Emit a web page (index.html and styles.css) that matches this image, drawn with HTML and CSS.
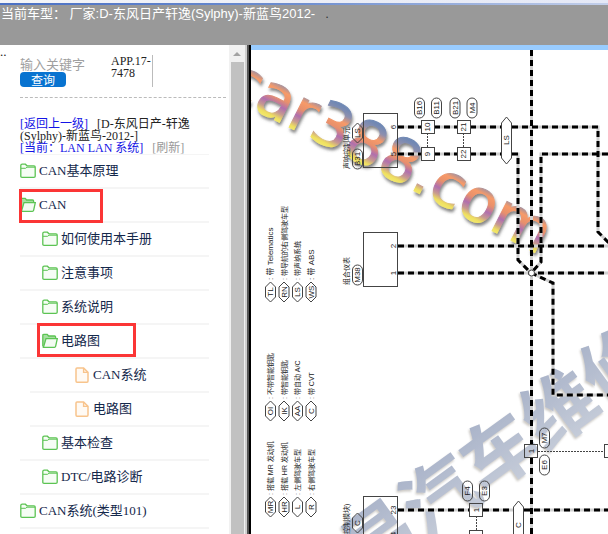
FILE: index.html
```html
<!DOCTYPE html>
<html lang="zh-CN">
<head>
<meta charset="utf-8">
<title>CAN</title>
<link rel="stylesheet" href="styles.css">
</head>
<body>
<svg class="defs" aria-hidden="true">
  <symbol id="folder" viewBox="0 0 16 16">
    <path d="M.8 13.2V2.6Q.8 1.2 2.2 1.2H5.4L7 2.8H14Q15.2 2.8 15.2 4V13.2Q15.2 14.3 14 14.3H2Q.8 14.3 .8 13.2Z" fill="#f6fdf5" stroke="#5cc453" stroke-width="1.3"/>
    <path d="M1 5.3H5.6L7 4.2H15" fill="none" stroke="#5cc453"/>
  </symbol>
  <symbol id="folder-open" viewBox="0 0 16 16">
    <path d="M.8 13.4V2.4Q.8 1.3 2 1.3H5.2L6.6 3H12.6Q13.6 3 13.6 4V5.5" fill="#a5dfa0" stroke="#5cc453" stroke-width="1.3"/>
    <path d="M4 5.6H15.3L13.6 13.4Q13.4 14.3 12.4 14.3H1.4L3 9Z" fill="#f3fbf2" stroke="#5cc453" stroke-width="1.3"/>
  </symbol>
  <symbol id="file" viewBox="0 0 14 16">
    <path d="M1 14V2Q1 .9 2 .9H8.6L13 5.4V14Q13 15.2 12 15.2H2Q1 15.2 1 14Z" fill="#fffaf4" stroke="#f8c48c" stroke-width="1.5"/>
    <path d="M8.6 1V5.4H13" fill="none" stroke="#f8c48c" stroke-width="1.4"/>
  </symbol>
</svg>

<header class="top">
  <h1 class="title">当前车型： 厂家:D-东风日产轩逸(Sylphy)-新蓝鸟2012-</h1>
  <span class="dot">.</span>
</header>

<main class="frames">
  <aside class="side">
    <span class="gutter">..</span>
    <div class="content">
      <form class="search">
        <div class="fields">
          <input class="keyword" type="text" placeholder="输入关键字" aria-label="输入关键字">
          <button class="go" type="button">查询</button>
        </div>
        <p class="app">APP.17-7478</p>
      </form>
      <p class="crumbs"><a href="#">[返回上一级]</a><span class="model">[D-东风日产-轩逸<br>(Sylphy)-新蓝鸟-2012-]</span><br><a href="#">[当前：LAN LAN 系统]</a><a class="refresh" href="#">[刷新]</a></p>
      <nav>
        <ul class="tree">
          <li><a class="row" href="#"><svg class="icon"><use href="#folder"/></svg>CAN基本原理</a></li>
          <li><a class="row marked" href="#"><svg class="icon"><use href="#folder-open"/></svg>CAN</a>
            <ul>
              <li><a class="row second" href="#"><svg class="icon"><use href="#folder"/></svg>如何使用本手册</a></li>
              <li><a class="row second" href="#"><svg class="icon"><use href="#folder"/></svg>注意事项</a></li>
              <li><a class="row second" href="#"><svg class="icon"><use href="#folder"/></svg>系统说明</a></li>
              <li><a class="row second marked" href="#"><svg class="icon"><use href="#folder-open"/></svg>电路图</a>
                <ul class="leaves">
                  <li><a class="row third" href="#"><svg class="icon page"><use href="#file"/></svg>CAN系统</a></li>
                  <li><a class="row third" href="#"><svg class="icon page"><use href="#file"/></svg>电路图</a></li>
                </ul>
              </li>
              <li><a class="row second" href="#"><svg class="icon"><use href="#folder"/></svg>基本检查</a></li>
              <li><a class="row second" href="#"><svg class="icon"><use href="#folder"/></svg>DTC/电路诊断</a></li>
            </ul>
          </li>
          <li><a class="row" href="#"><svg class="icon"><use href="#folder"/></svg>CAN系统(类型101)</a></li>
        </ul>
      </nav>
    </div>
  </aside>
  <div class="scroll" aria-hidden="true"><span class="arrow"></span><span class="thumb"></span></div>
  <div class="divider"></div>
  <section class="viewer">
    <div class="bar"></div>
    <svg class="diagram" viewBox="251 50 357 484" preserveAspectRatio="xMinYMin slice" role="img" aria-label="CAN系统 电路图">
      <defs>
        <linearGradient id="rainbow" gradientUnits="userSpaceOnUse" x1="0" y1="-43" x2="0" y2="2">
          <stop offset="0" stop-color="#6f88b4"/><stop offset=".16" stop-color="#8d8fae"/>
          <stop offset=".32" stop-color="#f79a68"/><stop offset=".48" stop-color="#e8906c"/>
          <stop offset=".64" stop-color="#b06fae"/><stop offset=".78" stop-color="#c79a90"/>
          <stop offset=".9" stop-color="#efe060"/><stop offset="1" stop-color="#f3ea70"/>
        </linearGradient>
        <linearGradient id="steel" x1="0" y1="0" x2="0" y2="1">
          <stop offset="0" stop-color="#8492b2"/><stop offset="1" stop-color="#b9c1d0"/>
        </linearGradient>
        <filter id="shade" x="-10%" y="-30%" width="120%" height="160%"><feDropShadow dx="1" dy="3" stdDeviation="1.5" flood-color="#555" flood-opacity=".7"/></filter>
        <filter id="emboss" x="-10%" y="-30%" width="120%" height="160%"><feDropShadow dx="-1" dy="2" stdDeviation="1" flood-color="#8d877c" flood-opacity=".6"/></filter>
        <path id="hex" d="M0-10L5-5V5L0 10L-5 5V-5Z"/>
        <rect id="pill" x="-5" y="-10" width="10" height="20" rx="5"/>
        <g id="wires">
          <path d="M398 127H421M434 127H457M470 127H501M512 127H598V232L610 244"/>
          <path d="M398 154H421M434 154H457M470 154H501M512 154H518V260L531 273"/>
          <path d="M608 154H541V262L531 273"/>
          <path d="M531.500 50V444M531.500 458V534"/>
          <path d="M398 246H608M398 273H608"/>
          <path d="M531 273L553 283V395H608"/>
          <path d="M398 510H469M483 510H513M524 510H608"/>
        </g>
      </defs>

      <g class="mark-cn" filter="url(#emboss)"><text transform="translate(499 452) rotate(-36)" y="27">易汽车维修</text></g>
      <g class="mark-en" filter="url(#shade)"><text transform="translate(222 93) rotate(27)">car388.com</text></g>

      <use href="#wires" class="casing"/>
      <use href="#wires" class="core"/>

      <g class="thin">
        <rect x="363.500" y="113.500" width="34" height="54"/>
        <rect x="363.500" y="232.500" width="34" height="54"/>
        <rect x="363.500" y="496.500" width="34" height="60"/>
        <path class="dots" d="M427.500 133V147M463.500 133V147M476.500 516V530M538 451.500H604"/>
        <g class="solid">
          <rect x="421.500" y="120.500" width="13" height="13"/><rect x="421.500" y="147.500" width="13" height="13"/>
          <rect x="457.500" y="120.500" width="13" height="13"/><rect x="457.500" y="147.500" width="13" height="13"/>
          <path d="M506.500 117L511.500 123V158L506.500 164L501.500 158V123Z"/>
          <path d="M513.500 540V507L518.500 501L523.500 507V540"/>
          <rect x="604.500" y="444.500" width="13" height="13"/>
          <rect x="469.500" y="530.500" width="13" height="13"/>
          <circle cx="531.500" cy="273" r="3"/>
        </g>
        <rect x="469.500" y="503.500" width="13" height="13"/>
        <rect x="524.500" y="444.500" width="13" height="13"/>
        <use href="#pill" x="419.500" y="108"/><use href="#pill" x="436.500" y="108"/><use href="#pill" x="455" y="108"/><use href="#pill" x="472" y="108"/>
        <use href="#pill" x="357.500" y="159"/><use href="#pill" x="357.500" y="275"/>
        <use href="#pill" x="544.500" y="438"/><use href="#pill" x="544.500" y="465"/>
        <use href="#pill" x="467.500" y="491"/><use href="#pill" x="484.500" y="491"/>
        <use href="#hex" x="357.500" y="133"/><use href="#hex" x="357.500" y="523"/>
        <use href="#hex" x="270.500" y="292"/><use href="#hex" x="284" y="292"/><use href="#hex" x="297.500" y="292"/><use href="#hex" x="311" y="292"/>
        <use href="#hex" x="270.500" y="411"/><use href="#hex" x="284" y="411"/><use href="#hex" x="297.500" y="411"/><use href="#hex" x="311" y="411"/>
        <use href="#hex" x="270.500" y="507"/><use href="#hex" x="284" y="507"/><use href="#hex" x="297.500" y="507"/><use href="#hex" x="311" y="507"/>
      </g>

      <g class="code">
        <text transform="translate(422 108) rotate(-90)">B16</text>
        <text transform="translate(439 108) rotate(-90)">B11</text>
        <text transform="translate(458 108) rotate(-90)">B21</text>
        <text transform="translate(475 108) rotate(-90)">M4</text>
        <text transform="translate(360 159) rotate(-90)">B31</text>
        <text transform="translate(360 133) rotate(-90)">LS</text>
        <text transform="translate(360 275) rotate(-90)">M38</text>
        <text transform="translate(360 523) rotate(-90)">C</text>
        <text transform="translate(547 438) rotate(-90)">M7</text>
        <text transform="translate(547 465) rotate(-90)">E6</text>
        <text transform="translate(470 491) rotate(-90)">F4</text>
        <text transform="translate(487 491) rotate(-90)">E3</text>
        <text transform="translate(509 140) rotate(-90)">LS</text>
        <text transform="translate(521 525) rotate(-90)">C</text>
        <text transform="translate(430 127) rotate(-90)">10</text>
        <text transform="translate(430 154) rotate(-90)">9</text>
        <text transform="translate(466 127) rotate(-90)">21</text>
        <text transform="translate(466 154) rotate(-90)">22</text>
        <text transform="translate(479 510) rotate(-90)">1</text>
        <text transform="translate(534 451) rotate(-90)">1</text>
        <text transform="translate(396 127) rotate(-90)">6</text>
        <text transform="translate(396 154) rotate(-90)">5</text>
        <text transform="translate(396 246) rotate(-90)">2</text>
        <text transform="translate(396 273) rotate(-90)">1</text>
        <text transform="translate(396 510) rotate(-90)">23</text>
        <text transform="translate(396 534) rotate(-90)">4</text>
        <text transform="translate(273 292) rotate(-90)">TL</text>
        <text transform="translate(287 292) rotate(-90)">RN</text>
        <text transform="translate(300 292) rotate(-90)">LS</text>
        <text transform="translate(314 292) rotate(-90)">WS</text>
        <text transform="translate(273 411) rotate(-90)">OI</text>
        <text transform="translate(287 411) rotate(-90)">IK</text>
        <text transform="translate(300 411) rotate(-90)">AA</text>
        <text transform="translate(314 411) rotate(-90)">C</text>
        <text transform="translate(273 507) rotate(-90)">MR</text>
        <text transform="translate(287 507) rotate(-90)">HR</text>
        <text transform="translate(300 507) rotate(-90)">L</text>
        <text transform="translate(314 507) rotate(-90)">R</text>
      </g>

      <g class="note">
        <text class="wide" transform="translate(273 280) rotate(-90)">: 带 Telematics</text>
        <text transform="translate(287 280) rotate(-90)">: 带导航的右侧驾驶车型</text>
        <text transform="translate(300 280) rotate(-90)">: 带声纳系统</text>
        <text class="wide" transform="translate(314 280) rotate(-90)">: 带 ABS</text>
        <text transform="translate(273 399) rotate(-90)">: 不带智能钥匙</text>
        <text transform="translate(287 399) rotate(-90)">: 带智能钥匙</text>
        <text transform="translate(300 399) rotate(-90)">: 带自动 A/C</text>
        <text transform="translate(314 399) rotate(-90)">: 带 CVT</text>
        <text transform="translate(273 495) rotate(-90)">: 搭载 MR 发动机</text>
        <text transform="translate(287 495) rotate(-90)">: 搭载 HR 发动机</text>
        <text transform="translate(300 495) rotate(-90)">: 左侧驾驶车型</text>
        <text transform="translate(314 495) rotate(-90)">: 右侧驾驶车型</text>
        <text transform="translate(349 169) rotate(-90)">声呐控制单元</text>
        <text transform="translate(349 285) rotate(-90)">组合仪表</text>
        <text transform="translate(349 534) rotate(-90)">控制模块)</text>
      </g>
    </svg>
  </section>
</main>
</body>
</html>
```
FILE: styles.css
```css
*, *::after { box-sizing: border-box; }

body {
  margin: 0;
  height: 100vh;
  display: flex;
  flex-direction: column;
  overflow: hidden;
  background: #fff;
  font: 13px/12px "Liberation Serif", "Noto Sans CJK SC", serif;
  color: #222;
}

h1, p, ul { margin: 0; padding: 0; }
ul { list-style: none; }
.defs { display: none; }

.top {
  flex: none;
  display: flex;
  gap: 10px;
  height: 45px;
  padding: 6px 1px 0;
  background:
    linear-gradient(90deg, #4a70c4, #6f8fd0 50%, #c3cfea) 0 3px / 100% 2px no-repeat,
    linear-gradient(90deg, #f4f5f8, #e4e8f6) 0 0 / 100% 5px no-repeat,
    #999;
  color: #fff;
  font: 13px/16px "Liberation Sans", "Noto Sans CJK SC", sans-serif;
}
.title { font-size: 13px; font-weight: 400; white-space: pre; }
.dot { color: #333; }

.frames { flex: 1; min-height: 0; display: flex; }

.side {
  flex: none;
  width: 229px;
  display: grid;
  grid-template-columns: 20px 1fr;
  padding-right: 3px;
  overflow: hidden;
}
.gutter { padding-top: 1px; }
.content { padding-top: 10px; }

.search {
  display: flex;
  gap: 11px;
  height: 43px;
  border-bottom: 1px dashed #bbb;
}
.fields { width: 80px; }
.keyword {
  display: block;
  width: 100%;
  height: 17px;
  padding: 3px 0 0;
  border: 0;
  background: none;
  font: inherit;
  outline: 0;
}
.keyword::placeholder { color: #a0a0a0; opacity: 1; }
.go {
  display: block;
  width: 46px;
  height: 15px;
  padding: 0;
  border: 0;
  border-radius: 4px;
  background: #0873d0;
  color: #fff;
  font: 12px/15px "Noto Sans CJK SC", sans-serif;
}
.app {
  width: 42px;
  height: 32px;
  border-right: 1px solid #bbb;
  font-size: 12px;
  word-break: break-all;
}

.crumbs { height: 56px; padding-top: 20px; font-size: 12px; }
.crumbs a { color: #1414e6; text-decoration: none; }
.crumbs .model { margin-left: 9px; }
.crumbs .refresh { margin-left: 9px; color: #999; }

.tree { width: 189px; border-top: 1px solid #f5f5f5; }
.row {
  position: relative;
  display: flex;
  align-items: center;
  gap: 3px;
  height: 34px;
  border-bottom: 2px solid #f5f5f5;
  color: #14284b;
  text-decoration: none;
}
.second { padding-left: 22px; }
.leaves { margin-left: 10px; }
.third { padding-left: 45px; gap: 4px; }
.icon { flex: none; width: 16px; height: 16px; }
.icon.page { width: 14px; }

.marked::after {
  content: "";
  position: absolute;
  top: 0;
  left: -1px;
  width: 84px;
  height: 34px;
  border: 3px solid #fb3535;
}
.second.marked::after { top: -2px; left: 17px; width: 99px; }

.scroll {
  flex: none;
  width: 16px;
  display: flex;
  flex-direction: column;
  align-items: center;
  background: #f1f1f1;
}
.arrow {
  margin: 7px 0 6px;
  border: 4px solid transparent;
  border-top: 0;
  border-bottom: 4px solid #a3a3a3;
}
.thumb { flex: 1; width: 13px; background: #c1c1c1; }

.divider {
  flex: none;
  width: 6px;
  background: linear-gradient(90deg, #d0d0d0 2px, #555 2px 4px, #000 4px);
}

.viewer { flex: 1; min-width: 0; display: flex; flex-direction: column; }
.bar { flex: none; height: 5px; background: #99ccff; }
.diagram {
  flex: 1;
  min-height: 0;
  width: 100%;
  font-family: "Liberation Sans", "Noto Sans CJK SC", sans-serif;
}

.mark-en { font: 60px "DejaVu Sans", sans-serif; fill: url(#rainbow); stroke: url(#rainbow); stroke-width: 1; }
.mark-cn { font: 700 74px "Noto Sans CJK SC", sans-serif; fill: url(#steel); text-anchor: middle; opacity: .75; }

.casing { fill: none; stroke: #d0d0d0; stroke-width: 3; }
.core { fill: none; stroke: #000; stroke-width: 3; stroke-dasharray: 6 4; }
.thin { fill: none; stroke: #444; stroke-width: 1; }
.solid { fill: #fff; }
.dots { stroke-dasharray: 2 1; }
.code { font-size: 8px; fill: #222; text-anchor: middle; }
.note { font-size: 7px; fill: #222; }
.wide { font-size: 8px; }
```
